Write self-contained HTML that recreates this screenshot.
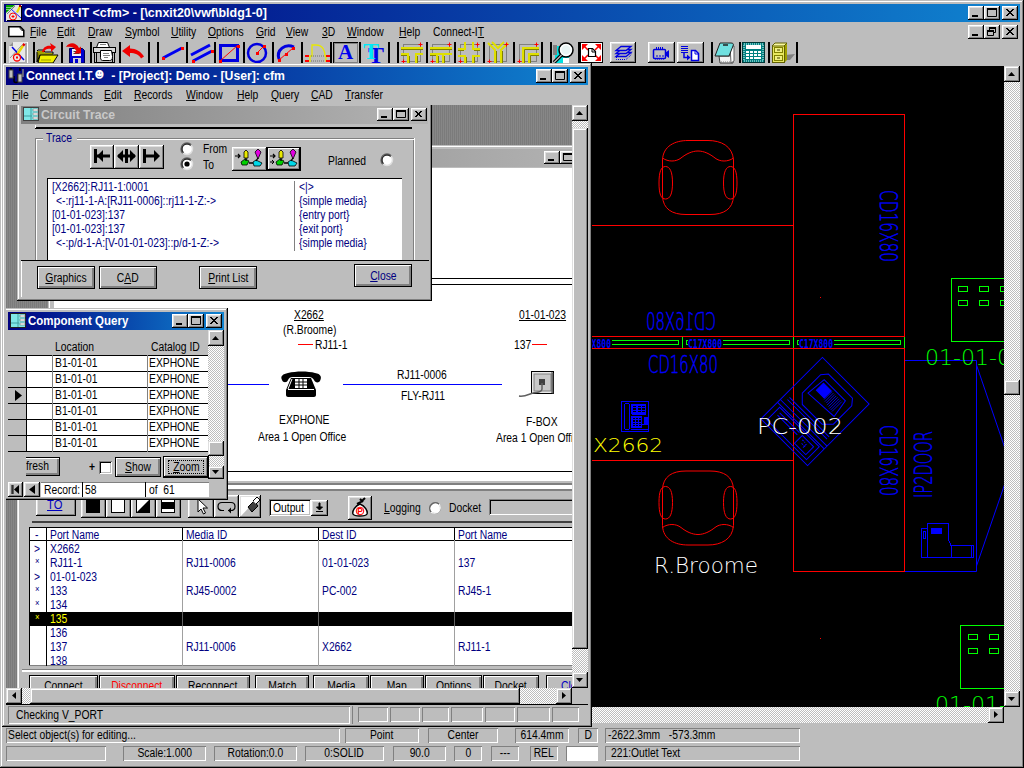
<!DOCTYPE html>
<html><head><meta charset="utf-8"><title>Connect-IT</title>
<style>
*{box-sizing:border-box;margin:0;padding:0}
html,body{width:1024px;height:768px;overflow:hidden;background:#bdbdbd}
body{position:relative;font-family:"Liberation Sans",sans-serif;font-size:12px;color:#000;line-height:14px}
.a{position:absolute}
.t{position:absolute;white-space:nowrap;transform:scaleX(.86);transform-origin:0 0;line-height:14px}
.tc{position:absolute;white-space:nowrap;text-align:center;line-height:14px}
.tc>span{display:inline-block;transform:scaleX(.86);transform-origin:50% 0}
.b{font-weight:bold}
u{text-decoration:underline;text-underline-offset:1px}
.win{position:absolute;background:#bdbdbd;box-shadow:inset -1px -1px #000,inset 1px 1px #bdbdbd,inset -2px -2px #808080,inset 2px 2px #fff}
.btn{position:absolute;background:#bdbdbd;box-shadow:inset -1px -1px #000,inset 1px 1px #fff,inset -2px -2px #808080,inset 2px 2px #dfdfdf}
.btnk{position:absolute;background:#bdbdbd;box-shadow:inset 0 0 0 1px #000,inset 2px 2px #fff,inset -3px -3px #808080}
.sunk{position:absolute;box-shadow:inset 1px 1px #808080,inset -1px -1px #fff,inset 2px 2px #000,inset -2px -2px #bdbdbd}
.st{position:absolute;box-shadow:inset 1px 1px #808080,inset -1px -1px #fff}
.tb{position:absolute;height:18px;background:linear-gradient(90deg,#000080,#1084d0)}
.tbi{position:absolute;height:18px;background:linear-gradient(90deg,#808080,#b8b8b8)}
.dith{background-color:#bdbdbd;background-image:conic-gradient(#fff 25%,#bdbdbd 0 50%,#fff 0 75%,#bdbdbd 0);background-size:2px 2px}
.cb{position:absolute;width:16px;height:14px;background:#bdbdbd;box-shadow:inset -1px -1px #000,inset 1px 1px #fff,inset -2px -2px #808080,inset 2px 2px #dfdfdf}
.cb svg{position:absolute;left:0;top:0}
.sb{position:absolute;width:16px;height:16px;background:#bdbdbd;box-shadow:inset -1px -1px #000,inset 1px 1px #dfdfdf,inset -2px -2px #808080,inset 2px 2px #fff}
.sb svg{position:absolute;left:0;top:0}
svg{overflow:visible}
</style></head><body>
<!-- ===== OUTER WINDOW FRAME ===== -->
<div class="win" style="left:0;top:0;width:1024px;height:768px"></div>
<div class="tb" style="left:4px;top:4px;width:1016px"></div>
<div class="t b" style="left:24px;top:6px;color:#fff;font-size:13px;transform:scaleX(.958)">Connect-IT &lt;cfm&gt; - [\cnxit20\vwf\bldg1-0]</div>
<!-- outer caption buttons -->
<div class="cb" style="left:968px;top:6px"><svg width="16" height="14"><rect x="4" y="9" width="6" height="2" fill="#000"/></svg></div>
<div class="cb" style="left:984px;top:6px"><svg width="16" height="14"><path d="M3.5 2.5h9v8h-9z M3 3.5h10" fill="none" stroke="#000" stroke-width="1"/><rect x="3" y="2" width="10" height="2" fill="#000"/></svg></div>
<div class="cb" style="left:1002px;top:6px"><svg width="16" height="14"><path d="M4 3l7 7M5 3l7 7M11 3l-7 7M12 3l-7 7" stroke="#000" stroke-width="1" fill="none"/></svg></div>
<div class="cb" style="left:968px;top:25px"><svg width="16" height="14"><rect x="4" y="9" width="6" height="2" fill="#000"/></svg></div>
<div class="cb" style="left:984px;top:25px"><svg width="16" height="14"><path d="M5.5 2.5h6v5h-6z M3.5 5.5h6v5h-6z" fill="#bdbdbd" stroke="#000"/><path d="M5 3h7M3 6h7" stroke="#000" stroke-width="2"/><rect x="4" y="7" width="5" height="3" fill="#bdbdbd"/></svg></div>
<div class="cb" style="left:1002px;top:25px"><svg width="16" height="14"><path d="M4 3l7 7M5 3l7 7M11 3l-7 7M12 3l-7 7" stroke="#000" stroke-width="1" fill="none"/></svg></div>
<!-- outer app icon -->
<svg class="a" style="left:6px;top:5px" width="16" height="16"><rect width="16" height="16" fill="#e4e4e4"/><path d="M0 0h9l-9 8z" fill="#00a000"/><path d="M0 2.500h6M0 4.500h4" stroke="#80d080" stroke-width="1"/><path d="M1 9l8-8" stroke="#808080" stroke-width="1"/><path d="M5 4l10 9" stroke="#2020ff" stroke-width="1"/><path d="M10 7l3-6 2 1-3 6z" fill="#e8e000"/><rect x="13" y="0" width="2" height="2" fill="#c00000"/><circle cx="7" cy="11.500" r="3.500" fill="none" stroke="#f00" stroke-width="1"/><path d="M5.500 11.500h3M7 10v3" stroke="#f00"/><path d="M15.500 1v15M1 15.500h15" stroke="#000" stroke-width="1"/></svg>
<!-- outer menu -->
<svg class="a" style="left:8px;top:26px" width="17" height="12"><path d="M.8 .8h11.500l3.500 3.500v6.200h-15z" fill="#fff" stroke="#000" stroke-width="1.500"/><path d="M12 1c0 2 1 3.500 3.500 3.500" fill="none" stroke="#000" stroke-width="1"/></svg>
<div class="t" style="left:30px;top:25px"><u>F</u>ile</div>
<div class="t" style="left:57px;top:25px"><u>E</u>dit</div>
<div class="t" style="left:88px;top:25px"><u>D</u>raw</div>
<div class="t" style="left:125px;top:25px"><u>S</u>ymbol</div>
<div class="t" style="left:171px;top:25px"><u>U</u>tility</div>
<div class="t" style="left:208px;top:25px"><u>O</u>ptions</div>
<div class="t" style="left:256px;top:25px"><u>G</u>rid</div>
<div class="t" style="left:286px;top:25px"><u>V</u>iew</div>
<div class="t" style="left:322px;top:25px"><u>3</u>D</div>
<div class="t" style="left:347px;top:25px"><u>W</u>indow</div>
<div class="t" style="left:399px;top:25px"><u>H</u>elp</div>
<div class="t" style="left:433px;top:25px">Connect-I<u>T</u></div>
<!--TB0-->
<!-- toolbar -->
<div class="a" style="left:4px;top:42px;width:2px;height:21px;background:#000"></div>
<svg class="a" style="left:6px;top:42px" width="24" height="21" viewBox="0 0 24 21"><path d="M3 4l4-4h14v21h-18z" fill="#e8e8e8"/><path d="M3 4h4v-4z" fill="#909090"/><path d="M19 1h2v20h-17v-1h15z" fill="#808080" opacity=".6"/><path d="M4 16l12-13" stroke="#909090" stroke-width="1"/><path d="M6 5l12 13" stroke="#0000e0" stroke-width="1.5"/><path d="M10 12l6-9 2 1.500-6 9z" fill="#e8d800"/><path d="M16 3l1.500-2 2 1.500-1.500 2z" fill="#e00000"/><circle cx="11" cy="15.500" r="3.500" fill="none" stroke="#f00" stroke-width="1.300"/><rect x="10" y="14.500" width="2" height="2" fill="#f00"/></svg>
<div class="a" style="left:33px;top:42px;width:2px;height:21px;background:#000"></div>
<svg class="a" style="left:35px;top:42px" width="24" height="21" viewBox="0 0 24 21"><path d="M2 9h7l1 2h8v3h-16z" fill="#a0a000"/><path d="M2 9l1-1h5l2 2h8v2" fill="none" stroke="#000" stroke-width="1"/><path d="M5 13h18l-5 8h-15z" fill="#f0f000" stroke="#000" stroke-width="1"/><path d="M2 10v10l3-7" fill="#808000" stroke="#000" stroke-width="1"/><path d="M7 10c1-5 5-7 9-6l-1-3 6 4-5 5v-3c-3-1-6 0-7 3z" fill="#f00000"/><path d="M6 18h10" stroke="#a0a000" stroke-width="1"/></svg>
<div class="a" style="left:61px;top:42px;width:2px;height:21px;background:#000"></div>
<svg class="a" style="left:63px;top:42px" width="24" height="21" viewBox="0 0 24 21"><path d="M6.500 6.500h13l2 2v12.500h-15z" fill="#0000d0" stroke="#000050" stroke-width="1"/><rect x="9" y="7" width="9" height="7" fill="#f0f0f0"/><path d="M10.500 9.500h5M10.500 11.500h6" stroke="#404040" stroke-width="1"/><rect x="10" y="16" width="8" height="5" fill="#d0d0d0"/><rect x="12" y="17" width="3" height="4" fill="#0000d0"/><path d="M3 5c3-5 10-5 13 1l2-1.500v7h-7l2.500-2.500c-2-4-6-5-10.500-4z" fill="#e80000"/></svg>
<div class="a" style="left:90px;top:42px;width:2px;height:21px;background:#000"></div>
<svg class="a" style="left:92px;top:42px" width="24" height="21" viewBox="0 0 24 21"><path d="M6.500 .5h9l2 5h-13z" fill="#fff" stroke="#000" stroke-width="1"/><path d="M8 2.500h6" stroke="#808080"/><rect x="1.500" y="5.500" width="22" height="5" fill="#d8d8d8" stroke="#000" stroke-width="1"/><path d="M2.500 10v11M4.500 10v11M20.500 10v11M22.500 10v11" stroke="#000" stroke-width="1"/><path d="M8.500 8.500h11l1 6c0 3-1 4-3 4h-7c-1 0-2-1-2-3z" fill="#fff" stroke="#000" stroke-width="1"/><path d="M11 11.500h6M11 13.500h7M12 15.500h4" stroke="#808080" stroke-width="1"/><path d="M2 20.500h21" stroke="#000" stroke-width="1"/></svg>
<div class="a" style="left:119px;top:42px;width:2px;height:21px;background:#000"></div>
<svg class="a" style="left:121px;top:42px" width="24" height="21" viewBox="0 0 24 21"><path d="M1 9l8-6v3.500c6 0 11 3 14 8l-3 2c-2-4-6-5.500-11-5.500v4z" fill="#f00000"/></svg>
<div class="a" style="left:27px;top:42px;width:1px;height:21px;background:#fff"></div>
<div class="a" style="left:148px;top:42px;width:2px;height:21px;background:#000"></div>
<div class="a" style="left:157px;top:42px;width:2px;height:21px;background:#000"></div>
<svg class="a" style="left:159px;top:42px" width="24" height="21" viewBox="0 0 24 21"><path d="M4 16l19-10" stroke="#0000f0" stroke-width="3"/><rect x="3" y="15" width="3" height="3" fill="#f00"/><rect x="22" y="5" width="3" height="3" fill="#f00"/></svg>
<div class="a" style="left:186px;top:42px;width:2px;height:21px;background:#000"></div>
<svg class="a" style="left:188px;top:42px" width="24" height="21" viewBox="0 0 24 21"><path d="M3 13l19-10M5 19l19-10" stroke="#0000f0" stroke-width="3"/><rect x="4" y="18" width="3" height="3" fill="#f00"/><rect x="23" y="8" width="3" height="3" fill="#f00"/></svg>
<div class="a" style="left:214px;top:42px;width:2px;height:21px;background:#000"></div>
<svg class="a" style="left:216px;top:42px" width="24" height="21" viewBox="0 0 24 21"><rect x="4.500" y="3.500" width="17" height="15" fill="none" stroke="#0000e0" stroke-width="3"/><path d="M4 19l18-16" stroke="#f00" stroke-width="1"/><rect x="3" y="18" width="3" height="3" fill="#f00"/><rect x="21" y="3" width="3" height="3" fill="#f00"/></svg>
<div class="a" style="left:243px;top:42px;width:2px;height:21px;background:#000"></div>
<svg class="a" style="left:245px;top:42px" width="24" height="21" viewBox="0 0 24 21"><circle cx="12" cy="11" r="9" fill="none" stroke="#0000e0" stroke-width="2.500"/><path d="M12 11l7-7" stroke="#f00" stroke-width="1"/><rect x="11" y="10" width="3" height="3" fill="#f00"/><rect x="18" y="3" width="3" height="3" fill="#f00"/></svg>
<div class="a" style="left:272px;top:42px;width:2px;height:21px;background:#000"></div>
<svg class="a" style="left:274px;top:42px" width="24" height="21" viewBox="0 0 24 21"><path d="M5 17c-3-9 6-16 15-12" fill="none" stroke="#0000e0" stroke-width="3"/><path d="M5 18l14-12" stroke="#f00" stroke-width="1"/><rect x="4" y="17" width="3" height="3" fill="#f00"/><rect x="11" y="11" width="3" height="3" fill="#f00"/><rect x="18" y="5" width="3" height="3" fill="#f00"/></svg>
<div class="a" style="left:301px;top:42px;width:2px;height:21px;background:#000"></div>
<svg class="a" style="left:303px;top:42px" width="28" height="21" viewBox="0 0 28 21"><path d="M7 20v-6h2v-11h4c7 0 9 6 9 11h1v6" fill="none" stroke="#e8e800" stroke-width="1.300"/><path d="M8 14h14M8 19h14" stroke="#707070" stroke-width="1" stroke-dasharray="1 1"/><rect x="2" y="13" width="4" height="2" fill="#f00"/><rect x="2" y="18" width="4" height="2" fill="#f00"/><rect x="23" y="13" width="4" height="2" fill="#f00"/><rect x="23" y="18" width="4" height="2" fill="#f00"/></svg>
<div class="a" style="left:330px;top:42px;width:2px;height:21px;background:#000"></div>
<div class="a" style="left:333px;top:42px;width:25px;height:21px;background:#bdbdbd;box-shadow:inset 1px 1px #000,inset -1px -1px #808080,inset 2px 2px #808080"></div>
<div class="a" style="left:333px;top:41px;width:25px;height:22px;text-align:center;font:bold 21px/22px 'Liberation Serif',serif;color:#0000f0">A</div>
<div class="a" style="left:359px;top:42px;width:2px;height:21px;background:#000"></div>
<svg class="a" style="left:359px;top:40px" width="30" height="24" viewBox="359 40 30 24" font-family="'Liberation Serif',serif" font-weight="bold" font-size="24"><text x="368" y="62.500" fill="#0000e8">T</text><text x="363" y="59.400" fill="#00e8f8">T</text></svg>
<div class="a" style="left:388px;top:42px;width:2px;height:21px;background:#000"></div>
<div class="a" style="left:397px;top:42px;width:2px;height:21px;background:#000"></div>
<svg class="a" style="left:399px;top:42px" width="26" height="21" viewBox="0 0 26 21"><rect x="4.500" y="2.500" width="17" height="17" fill="none" stroke="#808080"/><path d="M2 6h22M2 12h7v9M24 12h-7v9" stroke="#e0e000" stroke-width="2" fill="none"/><path d="M2 7.500h22M2 13.500h6M10.500 14v7M18.500 14v7" stroke="#808000" stroke-width="1" fill="none"/><path d="M19.5 2.5h4M21.5 0.5v4" stroke="#f00" stroke-width="1"/><path d="M2.5 19.5h4M4.5 17.5v4" stroke="#f00" stroke-width="1"/></svg>
<div class="a" style="left:426px;top:42px;width:2px;height:21px;background:#000"></div>
<svg class="a" style="left:428px;top:42px" width="26" height="21" viewBox="0 0 26 21"><rect x="4.500" y="2.500" width="17" height="17" fill="none" stroke="#808080"/><path d="M2 6h22M2 12h22M9 13v8M15 13v8" stroke="#e0e000" stroke-width="2" fill="none"/><path d="M2 7.500h22M2 13.500h6M10.500 14v7M16.500 14v7" stroke="#808000" stroke-width="1" fill="none"/><path d="M19.5 2.5h4M21.5 0.5v4" stroke="#f00" stroke-width="1"/><path d="M2.5 19.5h4M4.5 17.5v4" stroke="#f00" stroke-width="1"/></svg>
<div class="a" style="left:454px;top:42px;width:2px;height:21px;background:#000"></div>
<svg class="a" style="left:456px;top:42px" width="26" height="21" viewBox="0 0 26 21"><rect x="4.500" y="2.500" width="17" height="17" fill="none" stroke="#808080"/><path d="M2 7h7v-7M24 7h-7v-7M2 14h7v7M24 14h-7v7" stroke="#e0e000" stroke-width="2" fill="none"/><path d="M2 8.500h6M18 8.500h6M10.500 15v6M18.500 15v6" stroke="#808000" stroke-width="1" fill="none"/><path d="M19.5 2.5h4M21.5 0.5v4" stroke="#f00" stroke-width="1"/><path d="M2.5 19.5h4M4.5 17.5v4" stroke="#f00" stroke-width="1"/></svg>
<div class="a" style="left:483px;top:42px;width:2px;height:21px;background:#000"></div>
<svg class="a" style="left:485px;top:42px" width="26" height="21" viewBox="0 0 26 21"><rect x="4.500" y="2.500" width="17" height="17" fill="none" stroke="#808080"/><path d="M3 1l7 7v13M23 1l-7 7v13M7 0l6 6 6-6" stroke="#e0e000" stroke-width="2" fill="none"/><path d="M11.500 9v12M17.500 9v12" stroke="#808000" stroke-width="1" fill="none"/><path d="M19.5 2.5h4M21.5 0.5v4" stroke="#f00" stroke-width="1"/><path d="M2.5 19.5h4M4.5 17.5v4" stroke="#f00" stroke-width="1"/></svg>
<div class="a" style="left:513px;top:42px;width:2px;height:21px;background:#000"></div>
<svg class="a" style="left:515px;top:42px" width="26" height="21" viewBox="0 0 26 21"><rect x="4.500" y="2.500" width="17" height="17" fill="none" stroke="#808080"/><path d="M24 6h-16v15M24 12h-10v9" stroke="#e0e000" stroke-width="2" fill="none"/><path d="M24 7.500h-14.500v13.500M24 13.500h-8.500v7.500" stroke="#808000" stroke-width="1" fill="none"/><path d="M19.5 2.5h4M21.5 0.5v4" stroke="#f00" stroke-width="1"/><path d="M2.5 19.5h4M4.5 17.5v4" stroke="#f00" stroke-width="1"/></svg>
<div class="a" style="left:541px;top:42px;width:2px;height:21px;background:#000"></div>
<div class="a" style="left:550px;top:42px;width:2px;height:21px;background:#000"></div>
<svg class="a" style="left:552px;top:42px" width="26" height="21" viewBox="0 0 26 21"><rect x="3" y="4" width="14" height="17" fill="#00e0e0"/><rect x="1" y="3" width="4" height="10" fill="#808080"/><circle cx="14" cy="8" r="7" fill="#e8f4f4" stroke="#000" stroke-width="1.500"/><circle cx="14" cy="8" r="5.300" fill="none" stroke="#fff" stroke-width="1.200"/><path d="M9.500 13l-7.500 7.500" stroke="#000" stroke-width="3.500"/><path d="M9.500 13l-7.500 7.500" stroke="#bdbdbd" stroke-width="1.200"/><rect x="11" y="16" width="6" height="5" fill="#fff"/></svg>
<div class="a" style="left:578px;top:42px;width:2px;height:21px;background:#000"></div>
<svg class="a" style="left:580px;top:42px" width="23" height="21" viewBox="0 0 23 21"><rect x=".5" y=".5" width="22" height="20" fill="#fff" stroke="#000"/><path d="M2 2h6l-6 6zM21 2v6l-6-6zM2 19v-6l6 6zM21 19h-6l6-6z" fill="#f00"/><path d="M4 4l4 4M19 4l-4 4M4 17l4-4M19 17l-4-4" stroke="#f00" stroke-width="1.500"/><path d="M8.500 6.500h4l3 3v5h-7z" fill="#fff" stroke="#000" stroke-width="1.200"/><path d="M12 7v3h3" fill="none" stroke="#000" stroke-width="1"/></svg>
<div class="btn" style="left:610px;top:42px;width:26px;height:21px"><svg class="a" style="left:0;top:0" width="26" height="21" viewBox="0 0 26 21"><g fill="#bdbdbd" stroke="#0000e0" stroke-width="1.300"><path d="M6 14.500l5-4h10l-5 4z"/><path d="M6 11.500l5-4h10l-5 4z"/><path d="M6 8.500l5-4h10l-5 4z"/></g><path d="M6.500 15v2.500h9.500l5-4.500v-2" fill="none" stroke="#0000e0" stroke-width="1" stroke-dasharray="1 1"/></svg></div>
<div class="btn" style="left:648px;top:42px;width:27px;height:21px"><svg class="a" style="left:0;top:0" width="27" height="21" viewBox="0 0 27 21"><rect x="5.500" y="7.500" width="12" height="9" rx="1" fill="none" stroke="#0000e0" stroke-width="1.500"/><path d="M17 11l4-3v8l-4-3z" fill="#0000e0"/><path d="M8 6h7" stroke="#0000e0" stroke-width="2" stroke-dasharray="1 1"/><path d="M8 14h8" stroke="#0000e0" stroke-width="1" stroke-dasharray="2 1"/><path d="M7 17h10" stroke="#0000e0" stroke-width="1" stroke-dasharray="1 1"/></svg></div>
<div class="btn" style="left:677px;top:42px;width:27px;height:21px"><svg class="a" style="left:0;top:0" width="27" height="21" viewBox="0 0 27 21"><path d="M4 4.500h7M4 6.500h7M4 8.500h7M4 10.500h7" stroke="#0000e0" stroke-width="1"/><path d="M7 11v4.500h4" fill="none" stroke="#0000e0" stroke-width="1.500"/><path d="M10 12.500l3.500 3-3.500 3z" fill="#0000e0"/><path d="M14.500 8.500h4l3 3v7h-7z" fill="#fff" stroke="#0000e0" stroke-width="1.500"/><path d="M18 8.500v3.500h3.500" fill="none" stroke="#0000e0" stroke-width="1"/></svg></div>
<div class="a" style="left:711px;top:42px;width:2px;height:21px;background:#000"></div>
<svg class="a" style="left:713px;top:42px" width="24" height="21" viewBox="0 0 24 21"><path d="M6 14h14v7h-13z" fill="#f4f4f4" stroke="#404040" stroke-width="1"/><path d="M17 4h4v15l-3 2z" fill="#fff" stroke="#606060" stroke-width="1"/><path d="M7 1h11c2 0 3 1 2 3l-4 10h-14z" fill="#70e0e0" stroke="#202020" stroke-width="1"/><path d="M10 3h5" stroke="#202020" stroke-width="1.500"/><path d="M8 20h10" stroke="#808080" stroke-dasharray="1 1"/></svg>
<div class="a" style="left:739px;top:42px;width:2px;height:21px;background:#000"></div>
<svg class="a" style="left:742px;top:42px" width="23" height="21" viewBox="0 0 23 21"><rect x="0" y="0" width="23" height="21" fill="#008080"/><rect x=".5" y=".5" width="22" height="20" fill="none" stroke="#003838"/><rect x="2" y="2" width="19" height="17" fill="none" stroke="#e0ffff" stroke-dasharray="1 1"/><rect x="4" y="3" width="15" height="4" fill="#fff"/><g fill="#fff"><rect x="4" y="9" width="3" height="2"/><rect x="8" y="9" width="3" height="2"/><rect x="12" y="9" width="3" height="2"/><rect x="16" y="9" width="3" height="2"/><rect x="4" y="12" width="3" height="2"/><rect x="8" y="12" width="3" height="2"/><rect x="12" y="12" width="3" height="2"/><rect x="16" y="12" width="3" height="2"/><rect x="4" y="15" width="3" height="2"/><rect x="8" y="15" width="3" height="2"/><rect x="12" y="15" width="7" height="2"/></g></svg>
<div class="a" style="left:768px;top:42px;width:2px;height:21px;background:#000"></div>
<svg class="a" style="left:771px;top:42px" width="24" height="21" viewBox="0 0 24 21"><path d="M14 13l10-1-5 6h-5z" fill="#808080"/><path d="M1 4l3-3h12v17l-3 3z" fill="#a0a000"/><rect x="1.500" y="3.500" width="12" height="17" fill="#e8e860" stroke="#606000"/><path d="M1 4l3-3h12l-3 3z" fill="#f8f8a0" stroke="#606000" stroke-width="1"/><rect x="3.500" y="5.500" width="8" height="5" fill="#f0f080" stroke="#808000"/><rect x="3.500" y="13.500" width="8" height="5" fill="#f0f080" stroke="#808000"/><path d="M6 8h3M6 16h3" stroke="#404000" stroke-width="1"/></svg>
<div class="a" style="left:796px;top:42px;width:2px;height:21px;background:#000"></div>
<!--TB1-->
<!--CAD0-->
<!-- ===== CAD drawing area ===== -->
<div class="a" style="left:590px;top:64px;width:2px;height:644px;background:#808080"></div>
<div class="a" style="left:592px;top:66px;width:412px;height:641px;background:#000"></div>
<svg class="a" style="left:592px;top:66px;overflow:hidden" width="412" height="641" viewBox="592 66 412 641" font-family="'DejaVu Sans Light','DejaVu Sans Mono',monospace">
<g fill="none" stroke="#f00" stroke-width="1" shape-rendering="crispEdges">
<path d="M592 225.500H793.500M592 336.500H904.500M592 348.500H904.500M592 460.500H793.500"/>
<rect x="793.500" y="114.500" width="111" height="457"/>
<rect x="820" y="297" width="1" height="1" fill="#f00" stroke="none"/><rect x="820" y="638" width="1" height="1" fill="#f00" stroke="none"/>
</g>
<!-- chairs -->
<g fill="none" stroke="#f00" stroke-width="1">
<path d="M662.500 196V160C663 146 675 140.500 688 140.500H708C721 140.500 732.500 146 733.500 160V196C733 209 724 214.500 710 214.500H686C672 214.500 663 209 662.500 196ZM662.500 158C668 162 676 162 681 158C686 154 692 151 698 151C704 151 710 154 715 158C720 162 728 162 733.500 158M665.500 166.500C670 166.500 672.500 172 672.500 183C672.500 194 670 199 665.500 199C661 199 659 194 659 183C659 172 661 166.500 665.500 166.500ZM730.500 166.500C735 166.500 737 172 737 183C737 194 735 199 730.500 199C726 199 723.500 194 723.500 183C723.500 172 726 166.500 730.500 166.500Z"/>
<path transform="translate(0,685.500) scale(1,-1)" d="M662.500 196V160C663 146 675 140.500 688 140.500H708C721 140.500 732.500 146 733.500 160V196C733 209 724 214.500 710 214.500H686C672 214.500 663 209 662.500 196ZM662.500 158C668 162 676 162 681 158C686 154 692 151 698 151C704 151 710 154 715 158C720 162 728 162 733.500 158M665.500 166.500C670 166.500 672.500 172 672.500 183C672.500 194 670 199 665.500 199C661 199 659 194 659 183C659 172 661 166.500 665.500 166.500ZM730.500 166.500C735 166.500 737 172 737 183C737 194 735 199 730.500 199C726 199 723.500 194 723.500 183C723.500 172 726 166.500 730.500 166.500Z"/>
</g>
<!-- green wall inserts -->
<g fill="none" stroke="#0f0" stroke-width="1" shape-rendering="crispEdges">
<rect x="575.500" y="340.500" width="103" height="4"/><rect x="686.500" y="340.500" width="103" height="4"/><rect x="797.500" y="340.500" width="103" height="4"/>
<path d="M682.500 337v11M793.500 337v11M904.500 337v11"/>
<rect x="951.500" y="278.500" width="60" height="63"/>
<rect x="958.500" y="286.500" width="9" height="5"/><rect x="979.500" y="286.500" width="9" height="5"/><rect x="1000.500" y="286.500" width="9" height="5"/>
<rect x="958.500" y="300.500" width="9" height="5"/><rect x="979.500" y="300.500" width="9" height="5"/><rect x="1000.500" y="300.500" width="9" height="5"/>
<rect x="960.500" y="625.500" width="60" height="63"/>
<rect x="968.500" y="634.500" width="9" height="5"/><rect x="989.500" y="634.500" width="9" height="5"/>
<rect x="968.500" y="648.500" width="9" height="5"/><rect x="989.500" y="648.500" width="9" height="5"/>
</g>
<!-- blue lines -->
<g fill="none" stroke="#00f" stroke-width="1">
<path d="M905 360.500H976.500V571.500H905M976.500 365L1011 466L976.500 566" />
</g>
<!-- texts -->
<g fill="#00f" stroke="#00f" stroke-width=".45">
<g shape-rendering="crispEdges" stroke="none"><rect x="592" y="338" width="20" height="10" fill="#000"/><rect x="688" y="338" width="35" height="10" fill="#000"/><rect x="799" y="338" width="35" height="10" fill="#000"/></g>
<g font-family="'DejaVu Sans Mono',monospace" font-weight="bold" font-size="13" stroke="none">
<text x="577" y="347.500" textLength="34" lengthAdjust="spacingAndGlyphs">C17X800</text>
<text x="688" y="347.500" textLength="34" lengthAdjust="spacingAndGlyphs">C17X800</text>
<text x="799" y="347.500" textLength="34" lengthAdjust="spacingAndGlyphs">C17X800</text>
</g>
<text transform="translate(716,330) scale(-1,1)" font-size="25" textLength="70" lengthAdjust="spacingAndGlyphs">CD16X80</text>
<text x="648" y="373" font-size="25" textLength="70" lengthAdjust="spacingAndGlyphs">CD16X80</text>
<text transform="translate(880,190) rotate(90)" font-size="25" textLength="72" lengthAdjust="spacingAndGlyphs">CD16X80</text>
<text transform="translate(880,425) rotate(90)" font-size="25" textLength="71" lengthAdjust="spacingAndGlyphs">CD16X80</text>
<text transform="translate(932,498) rotate(-90)" font-size="25" textLength="67" lengthAdjust="spacingAndGlyphs">IP2DOOR</text>
</g>
<text x="593" y="452" font-size="19.500" fill="#ff0" textLength="70" lengthAdjust="spacingAndGlyphs">X2662</text>
<text x="654" y="573" font-size="21" fill="#fff" textLength="104" lengthAdjust="spacingAndGlyphs">R.Broome</text>
<text x="925" y="364.500" font-size="21" fill="#0f0" textLength="100" lengthAdjust="spacingAndGlyphs">01-01-02</text>
<text x="935" y="711.500" font-size="21" fill="#0f0" textLength="100" lengthAdjust="spacingAndGlyphs">01-01-02</text>
<!-- phone symbol -->
<g fill="none" stroke="#00f" stroke-width="1" shape-rendering="crispEdges">
<rect x="621.500" y="401.500" width="27" height="30"/>
<rect x="624.500" y="403.500" width="5" height="26" rx="2"/>
<rect x="631.500" y="404.500" width="14" height="9" fill="#00f"/>
<rect x="631.500" y="416.500" width="10" height="11" fill="#00f"/>
<path d="M632 414.500h14M631 429.500h17M642 424.500h6"/>
<rect x="644.500" y="417.500" width="3" height="6" fill="#00f"/>
<g fill="#000" stroke="none"><rect x="633" y="406" width="3" height="1"/><rect x="638" y="406" width="3" height="1"/><rect x="642" y="406" width="3" height="1"/><rect x="633" y="408" width="3" height="2"/><rect x="638" y="408" width="3" height="2"/><rect x="642" y="408" width="3" height="2"/><rect x="633" y="411" width="3" height="1"/><rect x="638" y="411" width="3" height="1"/><rect x="642" y="411" width="3" height="1"/>
<rect x="633" y="418" width="2" height="1"/><rect x="636" y="418" width="2" height="1"/><rect x="639" y="418" width="2" height="1"/><rect x="633" y="420" width="2" height="2"/><rect x="636" y="420" width="2" height="2"/><rect x="639" y="420" width="2" height="2"/><rect x="633" y="423" width="2" height="1"/><rect x="636" y="423" width="2" height="1"/><rect x="639" y="423" width="2" height="1"/><rect x="633" y="425" width="2" height="1"/><rect x="636" y="425" width="2" height="1"/><rect x="639" y="425" width="2" height="1"/></g>
</g>
<!-- PC symbol -->
<g transform="translate(815,411.500) rotate(45)" fill="none" stroke="#00f" stroke-width="1">
<rect x="-33" y="-43.500" width="66" height="87"/>
<path d="M-22 -4V-30L-17 -36H17L22 -30V-4L14 4H-14Z"/>
<path d="M-18 -8L-16 -29H14L17 -10Z"/>
<rect x="-14" y="-26" width="11" height="10" fill="#00f"/>
<path d="M-2 -26V-15M0 -26V-14M2 -26V-14M4 -26V-13M6 -26V-13M8 -26V-12M10 -26V-12M12 -26V-12" stroke-width=".8"/>
<path d="M-28 8H28M-28 11H28M-33 16H33M-33 20H33"/>
<rect x="-28" y="22" width="56" height="18"/>
<path d="M-24 26H4M-24 29H4"/>
<rect x="8" y="26" width="16" height="11"/><path d="M11 29h4M13 32h6M17 29v5" stroke-dasharray="2 1"/>
</g>
<text x="757" y="433.500" font-size="22" fill="#fff" textLength="86" lengthAdjust="spacingAndGlyphs">PC-002</text>
<!-- copier symbol -->
<g fill="none" stroke="#00f" stroke-width="1" shape-rendering="crispEdges">
<rect x="921.500" y="528.500" width="6" height="29"/><rect x="923.500" y="531.500" width="2" height="7"/>
<path d="M927.500 557.500V523.500H948.500V540L951.500 546.500V557.500ZM951.500 545.500H973.500V557.500H951.500M971.500 546v11"/>
<rect x="931" y="528" width="10" height="5" fill="#00f"/>
</g>
</svg>
<!-- CAD scrollbars -->
<div class="a dith" style="left:1004px;top:66px;width:16px;height:641px"></div>
<div class="sb" style="left:1004px;top:66px"><svg width="16" height="16"><path d="M4 10h7l-3.500-4z" fill="#000"/></svg></div>
<div class="sb" style="left:1004px;top:380px;height:15px"></div>
<div class="sb" style="left:1004px;top:691px"><svg width="16" height="16"><path d="M4 6h7l-3.500 4z" fill="#000"/></svg></div>
<div class="a dith" style="left:592px;top:707px;width:412px;height:16px"></div>
<div class="sb" style="left:988px;top:707px"><svg width="16" height="16"><path d="M6 4v7l4-3.500z" fill="#000"/></svg></div>
<div class="a" style="left:1004px;top:707px;width:16px;height:16px;background:#bdbdbd"></div>
<!--CAD1-->
<!--IN0-->
<!-- ===== INNER WINDOW: Connect I.T. ===== -->
<div class="win" style="left:2px;top:63px;width:590px;height:664px"></div>
<div class="tb" style="left:6px;top:67px;width:582px"></div>
<svg class="a" style="left:8px;top:68px" width="18" height="16"><path d="M3 0v3M12 0v3M6 8v5c0 2 4 2 4 0v-7" fill="none" stroke="#000" stroke-width="1.500"/><rect x="1" y="2" width="4" height="8" fill="#bdbdbd" stroke="#404040" stroke-width="1"/><rect x="10" y="6" width="4" height="8" fill="#bdbdbd" stroke="#404040" stroke-width="1"/><path d="M15 1v8" stroke="#808080" stroke-width="1.500"/></svg>
<div class="t b" style="left:26px;top:69px;color:#fff;font-size:13px;transform:scaleX(.94)">Connect I.T.<span style="font-size:10px;position:relative;top:-2px;font-weight:normal;font-family:'DejaVu Sans',sans-serif">&#9787;</span>&nbsp; - [Project]: Demo - [User]: cfm</div>
<div class="cb" style="left:536px;top:69px"><svg width="16" height="14"><rect x="4" y="9" width="6" height="2" fill="#000"/></svg></div>
<div class="cb" style="left:552px;top:69px"><svg width="16" height="14"><path d="M3.500 2.500h9v8h-9z" fill="none" stroke="#000"/><rect x="3" y="2" width="10" height="2" fill="#000"/></svg></div>
<div class="cb" style="left:570px;top:69px"><svg width="16" height="14"><path d="M4 3l7 7M5 3l7 7M11 3l-7 7M12 3l-7 7" stroke="#000" stroke-width="1" fill="none"/></svg></div>
<!-- inner menu -->
<div class="t" style="left:12px;top:88px"><u>F</u>ile</div>
<div class="t" style="left:40px;top:88px"><u>C</u>ommands</div>
<div class="t" style="left:104px;top:88px"><u>E</u>dit</div>
<div class="t" style="left:134px;top:88px"><u>R</u>ecords</div>
<div class="t" style="left:186px;top:88px"><u>W</u>indow</div>
<div class="t" style="left:237px;top:88px"><u>H</u>elp</div>
<div class="t" style="left:271px;top:88px"><u>Q</u>uery</div>
<div class="t" style="left:311px;top:88px"><u>C</u>AD</div>
<div class="t" style="left:345px;top:88px"><u>T</u>ransfer</div>
<!-- MDI client -->
<div id="mdi" class="a" style="left:6px;top:105px;width:566px;height:583px;background:#818181 linear-gradient(90deg,#7b7b7b 50%,#878787 50%) 0 0/2px 2px;overflow:hidden">
<div class="a" style="left:-6px;top:-105px;width:1024px;height:768px">
<!-- diagram window (background) -->
<div class="win" style="left:48px;top:145px;width:640px;height:340px"></div>
<div class="tbi" style="left:52px;top:149px;width:632px;background:linear-gradient(90deg,#808080,#bcbcbc)"></div>
<div class="cb" style="left:544px;top:151px;height:13px"><svg width="16" height="13"><rect x="4" y="8" width="6" height="2" fill="#000"/></svg></div>
<div class="cb" style="left:560px;top:151px;height:13px"><svg width="16" height="13"><path d="M3.500 2.500h9v7h-9z" fill="none" stroke="#000"/><rect x="3" y="2" width="10" height="2" fill="#000"/></svg></div>
<div class="a" style="left:54px;top:168px;width:530px;height:313px;background:#fff"></div>
<div class="a" style="left:54px;top:278px;width:530px;height:1px;background:#000"></div>
<div class="a" style="left:54px;top:284px;width:530px;height:1px;background:#000"></div>
<div class="a" style="left:54px;top:471px;width:530px;height:1px;background:#000"></div>
<!-- diagram content -->
<div class="t" style="left:294px;top:308px"><u>X2662</u></div>
<div class="t" style="left:283px;top:323px">(R.Broome)</div>
<div class="a" style="left:298px;top:344px;width:15px;height:1px;background:#f00"></div>
<div class="t" style="left:315px;top:338px">RJ11-1</div>
<div class="a" style="left:228px;top:384px;width:41px;height:1px;background:#00f"></div>
<div class="a" style="left:343px;top:384px;width:159px;height:1px;background:#00f"></div>
<svg class="a" style="left:280px;top:371px" width="42" height="26" viewBox="0 0 42 26"><path d="M2 9C0 5 3 3 8 2C16 0 28 0 35 2C41 3 42 6 40 10C39 12 35 12 34 9C33 7 31 6 29 6H13C10 6 9 7 8 9C7 12 3 12 2 9Z" fill="#000"/><path d="M11 7H31L36 19V24C36 25 35 26 34 26H8C7 26 6 25 6 24V19Z" fill="#000"/><path d="M8 18.500H34" stroke="#fff" stroke-width="1"/><rect x="15" y="8" width="12" height="9" fill="#fff"/><path d="M15 11h12M15 14h12M19 8v9M23 8v9" stroke="#000" stroke-width="1"/><path d="M12 8l-4 10" stroke="#fff" stroke-width="1"/></svg>
<div class="t" style="left:279px;top:413px">EXPHONE</div>
<div class="t" style="left:258px;top:430px">Area 1 Open Office</div>
<div class="t" style="left:397px;top:368px">RJ11-0006</div>
<div class="t" style="left:401px;top:389px">FLY-RJ11</div>
<div class="t" style="left:519px;top:308px"><u>01-01-023</u></div>
<div class="t" style="left:514px;top:338px">137</div>
<div class="a" style="left:532px;top:344px;width:15px;height:1px;background:#f00"></div>
<svg class="a" style="left:519px;top:371px" width="36" height="28" viewBox="0 0 36 28"><rect x="12.500" y=".5" width="22" height="22" fill="#e8e8e8" stroke="#000"/><rect x="15" y="3" width="17" height="17" fill="#c8c8c8" stroke="#808080"/><rect x="20" y="8" width="6" height="6" fill="#404040"/><path d="M23 12v6c0 4-6 3-9 4c-4 1-8 4-14 3" fill="none" stroke="#606060" stroke-width="1.500"/><path d="M33 1v21M34 2v21" stroke="#404040"/></svg>
<div class="t" style="left:526px;top:415px">F-BOX</div>
<div class="t" style="left:496px;top:431px">Area 1 Open Office</div>
<!-- bottom panel window -->
<div class="a" style="left:17px;top:481px;width:580px;height:215px;background:#bdbdbd"></div>
<div class="a" style="left:54px;top:481px;width:530px;height:2px;background:#bdbdbd"></div>
<div class="a" style="left:17px;top:483px;width:580px;height:2px;background:#808080"></div>
<div class="a" style="left:17px;top:485px;width:580px;height:4px;background:#fff"></div>
<div class="a" style="left:17px;top:489px;width:580px;height:2px;background:#808080"></div>
<div class="a" style="left:17px;top:483px;width:1px;height:210px;background:#dfdfdf"></div>
<div class="a" style="left:18px;top:484px;width:1px;height:210px;background:#fff"></div>
<div class="a" style="left:32px;top:521px;width:560px;height:2px;background:#404040"></div>
<!-- panel toolbar -->
<div class="btn" style="left:36px;top:495px;width:40px;height:21px"></div>
<div class="t" style="left:47px;top:498px;color:#0000c0;font-size:13px"><u>TO</u></div>
<div class="btn" style="left:81px;top:495px;width:25px;height:23px"><div class="a" style="left:5px;top:4px;width:14px;height:14px;background:#000"></div></div>
<div class="btn" style="left:106px;top:495px;width:25px;height:23px"><div class="a" style="left:5px;top:4px;width:14px;height:14px;background:#fff;border:1px solid #000"></div></div>
<div class="btn" style="left:131px;top:495px;width:25px;height:23px"><svg class="a" style="left:5px;top:4px" width="14" height="14"><rect width="14" height="14" fill="#fff"/><path d="M14 0v14h-14z" fill="#000"/><rect x=".5" y=".5" width="13" height="13" fill="none" stroke="#000"/></svg></div>
<div class="btn" style="left:156px;top:495px;width:25px;height:23px"><svg class="a" style="left:5px;top:4px" width="14" height="14"><rect width="14" height="14" fill="#fff"/><rect x="0" y="3" width="14" height="7" fill="#000"/><rect x=".5" y=".5" width="13" height="13" fill="none" stroke="#000"/></svg></div>
<div class="btn" style="left:188px;top:495px;width:26px;height:23px"><svg class="a" style="left:0;top:0" width="26" height="23"><path d="M10 4v13l3-3 2.500 5 2-1-2.500-5h4.500z" fill="#fff" stroke="#000" stroke-width="1"/></svg></div>
<div class="btn" style="left:214px;top:495px;width:25px;height:23px"><svg class="a" style="left:0;top:0" width="25" height="23"><path d="M10 15.500h-2c-3 0-4-2-4-4s1-4 4-4h9c3 0 4 2 4 4s-1 4-4 4h-3" fill="none" stroke="#000" stroke-width="1.200"/><path d="M14 15.500l3-3v6z" fill="#000"/></svg></div>
<div class="btn" style="left:239px;top:495px;width:22px;height:23px"><svg class="a" style="left:0;top:0" width="22" height="23"><path d="M2 21L20 2H2z" fill="#fff"/><path d="M9 12l6-6 4 5-6 6z" fill="#404040" stroke="#000"/><path d="M14 6l4-4 3 3-4 4" fill="#fff" stroke="#000"/></svg></div>
<div class="sunk" style="left:269px;top:499px;width:42px;height:17px;background:#fff"></div>
<div class="t" style="left:273px;top:501px">Output</div>
<div class="btn" style="left:311px;top:500px;width:17px;height:16px"><svg class="a" style="left:0;top:0" width="17" height="16"><path d="M8 3v4h-2.500l3 3 3-3h-2.500v-4zM5 11.500h7" fill="#000" stroke="#000" stroke-width="1"/></svg></div>
<div class="btn" style="left:348px;top:496px;width:24px;height:24px"><svg class="a" style="left:0;top:0" width="24" height="24"><path d="M12 8c-5 2-8 7-7 10c1 2 3 2 7 2s6 0 7-2c1-3-2-8-7-10z" fill="#fff" stroke="#000" stroke-width="1.500"/><path d="M9 8l4-2 4-4M12 3l3 3" stroke="#000" stroke-width="2" fill="none"/><circle cx="12" cy="15" r="3.800" fill="#fff" stroke="#f00" stroke-width="1"/><text x="9.300" y="18.300" font-size="8.500" font-weight="bold" fill="#f00" font-family="'Liberation Sans',sans-serif">P</text></svg></div>
<div class="t" style="left:384px;top:501px"><u>L</u>ogging</div>
<svg class="a" style="left:428px;top:501px" width="14" height="14"><circle cx="7" cy="7" r="5.500" fill="#fff" stroke="#808080" stroke-width="1"/><path d="M3 11a5.700 5.700 0 008-8" fill="none" stroke="#fff" stroke-width="1.200"/><path d="M11 3a5.700 5.700 0 00-8 8" fill="none" stroke="#606060" stroke-width="1.200"/></svg>
<div class="t" style="left:449px;top:501px">Docket</div>
<div class="sunk" style="left:489px;top:499px;width:100px;height:16px"></div>
<!-- table -->
<div class="a" style="left:29px;top:527px;width:560px;height:139px;background:#fff;border:1px solid #000;border-width:1px 0 0 1px"></div><div class="a" style="left:29px;top:665px;width:560px;height:1px;background:#808080"></div><div class="a" style="left:22px;top:669px;width:560px;height:1px;background:#808080"></div><div class="a" style="left:22px;top:670px;width:560px;height:2px;background:#fff"></div>
<div class="a" style="left:30px;top:540px;width:560px;height:1px;background:#000"></div>
<div class="a" style="left:46px;top:527px;width:1px;height:139px;background:#000"></div>
<div class="a" style="left:182px;top:527px;width:1px;height:139px;background:#a0a0a0"></div>
<div class="a" style="left:318px;top:527px;width:1px;height:139px;background:#a0a0a0"></div>
<div class="a" style="left:454px;top:527px;width:1px;height:139px;background:#a0a0a0"></div>
<div class="a" style="left:182px;top:527px;width:1px;height:13px;background:#000"></div>
<div class="a" style="left:318px;top:527px;width:1px;height:13px;background:#000"></div>
<div class="a" style="left:454px;top:527px;width:1px;height:13px;background:#000"></div>
<div class="a" style="left:30px;top:612px;width:560px;height:14px;background:#000"></div>
<div style="color:#000080">
<div class="t" style="left:35px;top:528px">-</div><div class="t" style="left:50px;top:528px">Port Name</div><div class="t" style="left:186px;top:528px">Media ID</div><div class="t" style="left:322px;top:528px">Dest ID</div><div class="t" style="left:458px;top:528px">Port Name</div>
<div class="t" style="left:34px;top:542px">&gt;</div><div class="t" style="left:50px;top:542px">X2662</div>
<div class="t" style="left:35px;top:554px;font-size:9px">&#215;</div><div class="t" style="left:50px;top:556px">RJ11-1</div><div class="t" style="left:186px;top:556px">RJ11-0006</div><div class="t" style="left:322px;top:556px">01-01-023</div><div class="t" style="left:458px;top:556px">137</div>
<div class="t" style="left:34px;top:570px">&gt;</div><div class="t" style="left:50px;top:570px">01-01-023</div>
<div class="t" style="left:35px;top:582px;font-size:9px">&#215;</div><div class="t" style="left:50px;top:584px">133</div><div class="t" style="left:186px;top:584px">RJ45-0002</div><div class="t" style="left:322px;top:584px">PC-002</div><div class="t" style="left:458px;top:584px">RJ45-1</div>
<div class="t" style="left:35px;top:596px;font-size:9px">&#215;</div><div class="t" style="left:50px;top:598px">134</div>
<div class="t" style="left:35px;top:610px;font-size:9px;color:#ff0">&#215;</div><div class="t" style="left:50px;top:612px;color:#ff0">135</div>
<div class="t" style="left:50px;top:626px">136</div>
<div class="t" style="left:50px;top:640px">137</div><div class="t" style="left:186px;top:640px">RJ11-0006</div><div class="t" style="left:322px;top:640px">X2662</div><div class="t" style="left:458px;top:640px">RJ11-1</div>
<div class="t" style="left:50px;top:654px">138</div>
</div>
<div class="a" style="left:182px;top:612px;width:1px;height:14px;background:#606060"></div><div class="a" style="left:318px;top:612px;width:1px;height:14px;background:#606060"></div><div class="a" style="left:454px;top:612px;width:1px;height:14px;background:#606060"></div>
<!-- bottom buttons (clipped by scrollbar) -->
<div class="btnk" style="left:29px;top:675px;width:69px;height:22px"></div><div class="tc" style="left:29px;top:679px;width:69px"><span>Connect</span></div>
<div class="btnk" style="left:99px;top:675px;width:76px;height:22px"></div><div class="tc" style="left:99px;top:679px;width:76px;color:#f00"><span>Disconnect</span></div>
<div class="btnk" style="left:176px;top:675px;width:74px;height:22px"></div><div class="tc" style="left:176px;top:679px;width:74px"><span>Reconnect</span></div>
<div class="btnk" style="left:255px;top:675px;width:54px;height:22px"></div><div class="tc" style="left:255px;top:679px;width:54px"><span>Match</span></div>
<div class="btnk" style="left:313px;top:675px;width:56px;height:22px"></div><div class="tc" style="left:313px;top:679px;width:56px"><span>Media</span></div>
<div class="btnk" style="left:370px;top:675px;width:54px;height:22px"></div><div class="tc" style="left:370px;top:679px;width:54px"><span>Map</span></div>
<div class="btnk" style="left:425px;top:675px;width:57px;height:22px"></div><div class="tc" style="left:425px;top:679px;width:57px"><span>Options</span></div>
<div class="btnk" style="left:483px;top:675px;width:56px;height:22px"></div><div class="tc" style="left:483px;top:679px;width:56px"><span>Docket</span></div>
<div class="btn" style="left:546px;top:675px;width:60px;height:22px;box-shadow:inset 0 0 0 1px #000,inset 2px 2px #fff"></div><div class="t" style="left:561px;top:679px;color:#0000c0">Close</div>
<!-- ===== Circuit Trace window ===== -->
<div class="win" style="left:17px;top:102px;width:415px;height:199px"></div>
<div class="tbi" style="left:21px;top:106px;width:407px;background:linear-gradient(90deg,#808080,#b4b4b4)"></div>
<svg class="a" style="left:23px;top:107px" width="16" height="16"><rect x=".5" y=".5" width="15" height="13" fill="#80e8e8" stroke="#404040"/><path d="M1 9h8M8 1v12" stroke="#40a0a0"/><rect x="10" y="2" width="5" height="2" fill="#fff" stroke="#606060" stroke-width=".5"/><rect x="10" y="6" width="5" height="2" fill="#fff" stroke="#606060" stroke-width=".5"/><rect x="10" y="10" width="5" height="2" fill="#fff" stroke="#606060" stroke-width=".5"/></svg>
<div class="t b" style="left:41px;top:108px;color:#c8c8c8;font-size:13px;transform:scaleX(.94)">Circuit Trace</div>
<div class="cb" style="left:377px;top:108px;height:13px"><svg width="16" height="13"><rect x="4" y="8" width="6" height="2" fill="#000"/></svg></div>
<div class="cb" style="left:393px;top:108px;height:13px"><svg width="16" height="13"><path d="M3.500 2.500h9v7h-9z" fill="none" stroke="#000"/><rect x="3" y="2" width="10" height="2" fill="#000"/></svg></div>
<div class="cb" style="left:411px;top:108px;height:13px"><svg width="16" height="13"><path d="M4 3l6 6M5 3l6 6M10 3l-6 6M11 3l-6 6" stroke="#000" stroke-width="1" fill="none"/></svg></div>
<div class="a" style="left:35px;top:127px;width:377px;height:2px;background:#000"></div>
<div class="a" style="left:35px;top:125px;width:1px;height:3px;background:#fff"></div>
<!-- group box -->
<div class="a" style="left:35px;top:138px;width:379px;height:130px;border:1px solid #808080;border-bottom:0"></div>
<div class="a" style="left:36px;top:139px;width:379px;height:130px;border:1px solid #fff;border-bottom:0;border-right:0"></div>
<div class="a" style="left:414px;top:138px;width:1px;height:130px;background:#fff"></div>
<div class="a" style="left:43px;top:132px;width:34px;height:14px;background:#bdbdbd"></div>
<div class="t" style="left:46px;top:131px;color:#000080">Trace</div>
<!-- nav buttons -->
<div class="btn" style="left:90px;top:145px;width:24px;height:24px"><svg class="a" style="left:0;top:0" width="24" height="24"><path d="M5.500 4v14" stroke="#000" stroke-width="3"/><path d="M7 11h13" stroke="#000" stroke-width="3"/><path d="M7 11l6-6v12z" fill="#000"/></svg></div>
<div class="btn" style="left:114px;top:145px;width:25px;height:24px"><svg class="a" style="left:0;top:0" width="25" height="24"><path d="M12.500 4v14" stroke="#000" stroke-width="3"/><path d="M4 11h17" stroke="#000" stroke-width="3"/><path d="M3 11l6-6v12zM22 11l-6-6v12z" fill="#000"/></svg></div>
<div class="btn" style="left:139px;top:145px;width:25px;height:24px"><svg class="a" style="left:0;top:0" width="25" height="24"><path d="M5.500 4v14" stroke="#000" stroke-width="3"/><path d="M6 11h12" stroke="#000" stroke-width="3"/><path d="M21 11l-6-6v12z" fill="#000"/></svg></div>
<!-- radios -->
<svg class="a" style="left:180px;top:142px" width="14" height="14"><circle cx="7" cy="7" r="5.500" fill="#fff" stroke="#dfdfdf" stroke-width="1.500"/><path d="M11.200 2.800a5.900 5.900 0 00-8.400 8.400" fill="none" stroke="#606060" stroke-width="1.500"/><path d="M10.500 3.500a4.900 4.900 0 00-7 7" fill="none" stroke="#000" stroke-width="1"/></svg>
<svg class="a" style="left:180px;top:157px" width="14" height="14"><circle cx="7" cy="7" r="5.500" fill="#fff" stroke="#dfdfdf" stroke-width="1.500"/><path d="M11.200 2.800a5.900 5.900 0 00-8.400 8.400" fill="none" stroke="#606060" stroke-width="1.500"/><path d="M10.500 3.500a4.900 4.900 0 00-7 7" fill="none" stroke="#000" stroke-width="1"/><circle cx="7" cy="7" r="2.600" fill="#000"/></svg>
<div class="t" style="left:203px;top:142px">From</div>
<div class="t" style="left:203px;top:158px">To</div>
<!-- icon buttons -->
<div class="btn" style="left:232px;top:147px;width:35px;height:24px"><svg class="a" style="left:0;top:0" width="35" height="24"><g><path d="M3 9h5M6 7l2 2-2 2" stroke="#000" fill="none" stroke-width="1.200"/><path d="M12 5l2-2 2 2v6h-4z" fill="#e8e800" stroke="#000" stroke-width=".8"/><path d="M23 5l3-3 3 3-3 7z" fill="#e000e0" stroke="#000" stroke-width=".8"/><path d="M9 15l4-3 4 2-2 4h-5z" fill="#00d000" stroke="#000" stroke-width=".8"/><path d="M21 15l3-2 6 3-2 3h-6z" fill="#00d8e8" stroke="#000" stroke-width=".8"/><path d="M14 11v3M26 11l-2 3M17 16h4" stroke="#000" stroke-width="1.300"/></g></svg></div>
<div class="btn" style="left:267px;top:147px;width:34px;height:24px;box-shadow:inset 0 0 0 1px #000,inset -2px -2px #000,inset 2px 2px #fff,inset -3px -3px #808080"><svg class="a" style="left:0;top:0" width="34" height="24"><g><path d="M3 9h5M6 7l2 2-2 2" stroke="#000" fill="none" stroke-width="1.200"/><path d="M12 5l2-2 2 2v6h-4z" fill="#e8e800" stroke="#000" stroke-width=".8"/><path d="M23 5l3-3 3 3-3 7z" fill="#e000e0" stroke="#000" stroke-width=".8"/><path d="M9 15l4-3 4 2-2 4h-5z" fill="#00d000" stroke="#000" stroke-width=".8"/><path d="M21 15l3-2 6 3-2 3h-6z" fill="#00d8e8" stroke="#000" stroke-width=".8"/><path d="M14 11v3M26 11l-2 3M17 16h4" stroke="#000" stroke-width="1.300"/></g><path d="M3 15h4M5 13l2 2-2 2" stroke="#000" fill="none"/></svg></div>
<div class="t" style="left:328px;top:154px">Planned</div>
<svg class="a" style="left:380px;top:153px" width="14" height="14"><circle cx="7" cy="7" r="5.500" fill="#fff" stroke="#dfdfdf" stroke-width="1.500"/><path d="M11.200 2.800a5.900 5.900 0 00-8.400 8.400" fill="none" stroke="#606060" stroke-width="1.500"/><path d="M10.500 3.500a4.900 4.900 0 00-7 7" fill="none" stroke="#000" stroke-width="1"/></svg>
<!-- list box -->
<div class="a" style="left:47px;top:178px;width:355px;height:84px;background:#fff;border-top:1px solid #000;border-left:1px solid #000"></div>
<div class="a" style="left:294px;top:181px;width:1px;height:70px;background:#808080"></div>
<div style="color:#000080">
<div class="t" style="left:52px;top:180px">[X2662]:RJ11-1:0001</div><div class="t" style="left:299px;top:180px">&lt;|&gt;</div>
<div class="t" style="left:56px;top:194px">&lt;-:rj11-1-A:[RJ11-0006]::rj11-1-Z:-&gt;</div><div class="t" style="left:299px;top:194px">{simple media}</div>
<div class="t" style="left:52px;top:208px">[01-01-023]:137</div><div class="t" style="left:299px;top:208px">{entry port}</div>
<div class="t" style="left:52px;top:222px">[01-01-023]:137</div><div class="t" style="left:299px;top:222px">{exit port}</div>
<div class="t" style="left:56px;top:236px">&lt;-:p/d-1-A:[V-01-01-023]::p/d-1-Z:-&gt;</div><div class="t" style="left:299px;top:236px">{simple media}</div>
</div>
<!-- bottom button panel -->
<div class="a" style="left:21px;top:260px;width:408px;height:38px;background:#bdbdbd;border-top:1px solid #000"></div>
<div class="a" style="left:21px;top:261px;width:1px;height:36px;background:#fff"></div>
<div class="btnk" style="left:37px;top:266px;width:58px;height:23px"></div><div class="tc" style="left:37px;top:271px;width:58px"><span><u>G</u>raphics</span></div>
<div class="btnk" style="left:99px;top:266px;width:58px;height:23px"></div><div class="tc" style="left:99px;top:271px;width:58px"><span>C<u>A</u>D</span></div>
<div class="btnk" style="left:199px;top:266px;width:58px;height:23px"></div><div class="tc" style="left:199px;top:271px;width:58px"><span><u>P</u>rint List</span></div>
<div class="btnk" style="left:354px;top:264px;width:58px;height:23px"></div><div class="tc" style="left:354px;top:269px;width:58px;color:#000080"><span><u>C</u>lose</span></div>
<!-- ===== Component Query window ===== -->
<div class="win" style="left:4px;top:308px;width:224px;height:192px"></div>
<div class="tb" style="left:8px;top:312px;width:216px"></div>
<svg class="a" style="left:10px;top:313px" width="16" height="16"><rect x=".5" y=".5" width="15" height="14" fill="#80e8e8" stroke="#202020"/><path d="M1 10h8M8 1v13" stroke="#40a0a0"/><rect x="10" y="2" width="5" height="2" fill="#fff" stroke="#606060" stroke-width=".5"/><rect x="10" y="6" width="5" height="2" fill="#fff" stroke="#606060" stroke-width=".5"/><rect x="10" y="10" width="5" height="2" fill="#fff" stroke="#606060" stroke-width=".5"/></svg>
<div class="t b" style="left:28px;top:314px;color:#fff;font-size:13px;transform:scaleX(.885)">Component Query</div>
<div class="cb" style="left:172px;top:314px"><svg width="16" height="14"><rect x="4" y="9" width="6" height="2" fill="#000"/></svg></div>
<div class="cb" style="left:188px;top:314px"><svg width="16" height="14"><path d="M3.500 2.500h9v8h-9z" fill="none" stroke="#000"/><rect x="3" y="2" width="10" height="2" fill="#000"/></svg></div>
<div class="cb" style="left:206px;top:314px"><svg width="16" height="14"><path d="M4 3l7 7M5 3l7 7M11 3l-7 7M12 3l-7 7" stroke="#000" stroke-width="1" fill="none"/></svg></div>
<!-- header -->
<div class="t" style="left:55px;top:340px">Location</div>
<div class="t" style="left:151px;top:340px">Catalog ID</div>
<!-- grid -->
<div class="a" style="left:8px;top:355px;width:200px;height:97px;background:#fff"></div>
<div class="a" style="left:8px;top:355px;width:19px;height:97px;background:#bdbdbd"></div>
<div class="a" style="left:8px;top:355px;width:200px;height:1px;background:#000"></div>
<div class="a" style="left:8px;top:371px;width:200px;height:1px;background:#000"></div>
<div class="a" style="left:8px;top:387px;width:200px;height:1px;background:#000"></div>
<div class="a" style="left:8px;top:403px;width:200px;height:1px;background:#000"></div>
<div class="a" style="left:8px;top:419px;width:200px;height:1px;background:#000"></div>
<div class="a" style="left:8px;top:435px;width:200px;height:1px;background:#000"></div>
<div class="a" style="left:8px;top:451px;width:200px;height:1px;background:#000"></div>
<div class="a" style="left:26px;top:355px;width:1px;height:97px;background:#000"></div>
<div class="a" style="left:52px;top:355px;width:1px;height:97px;background:#808080"></div>
<div class="a" style="left:147px;top:355px;width:1px;height:97px;background:#808080"></div>
<div class="t" style="left:55px;top:356px">B1-01-01</div><div class="t" style="left:149px;top:356px">EXPHONE</div>
<div class="t" style="left:55px;top:372px">B1-01-01</div><div class="t" style="left:149px;top:372px">EXPHONE</div>
<div class="t" style="left:55px;top:388px">B1-01-01</div><div class="t" style="left:149px;top:388px">EXPHONE</div>
<div class="t" style="left:55px;top:404px">B1-01-01</div><div class="t" style="left:149px;top:404px">EXPHONE</div>
<div class="t" style="left:55px;top:420px">B1-01-01</div><div class="t" style="left:149px;top:420px">EXPHONE</div>
<div class="t" style="left:55px;top:436px">B1-01-01</div><div class="t" style="left:149px;top:436px">EXPHONE</div>
<svg class="a" style="left:14px;top:390px" width="9" height="11"><path d="M1 0v11l7-5.500z" fill="#000"/></svg>
<!-- vscroll -->
<div class="a dith" style="left:208px;top:330px;width:16px;height:149px"></div>
<div class="sb" style="left:208px;top:330px"><svg width="16" height="16"><path d="M4 10h7l-3.500-4z" fill="#000"/></svg></div>
<div class="sb" style="left:208px;top:441px;height:15px"></div>
<div class="sb" style="left:208px;top:466px;height:13px"><svg width="16" height="13"><path d="M4 4h7l-3.500 4z" fill="#000"/></svg></div>
<!-- controls -->
<div class="a" style="left:26px;top:457px;width:34px;height:19px;overflow:hidden"><div class="btnk" style="left:-30px;top:0;width:64px;height:19px"></div></div><div class="t" style="left:26px;top:459px">fresh</div>
<div class="t b" style="left:89px;top:460px">+</div>
<div class="sunk" style="left:99px;top:461px;width:13px;height:13px;background:#fff"></div>
<div class="btnk" style="left:115px;top:457px;width:46px;height:20px"></div><div class="tc" style="left:115px;top:460px;width:46px"><span><u>S</u>how</span></div>
<div class="btn" style="left:163px;top:456px;width:46px;height:22px;box-shadow:inset 0 0 0 1px #000,inset -2px -2px #000,inset 2px 2px #fff,inset -3px -3px #808080"></div><div class="tc" style="left:163px;top:460px;width:46px"><span><u>Z</u>oom</span></div>
<div class="a" style="left:168px;top:460px;width:36px;height:14px;border:1px dotted #000"></div>
<!-- record navigator -->
<div class="btn" style="left:8px;top:482px;width:15px;height:15px"><svg class="a" style="left:0;top:0" width="15" height="15"><path d="M4 3v9M5 3v9" stroke="#000"/><path d="M11 3v9l-5-4.500z" fill="#000"/></svg></div>
<div class="btn" style="left:24px;top:482px;width:16px;height:15px"><svg class="a" style="left:0;top:0" width="16" height="15"><path d="M11 3v9l-6-4.500z" fill="#000"/></svg></div>
<div class="a" style="left:41px;top:482px;width:168px;height:15px;background:#fff;border-top:1px solid #808080"></div>
<div class="a" style="left:82px;top:482px;width:1px;height:15px;background:#000"></div>
<div class="a" style="left:145px;top:482px;width:1px;height:15px;background:#000"></div>
<div class="t" style="left:44px;top:483px">Record:</div><div class="t" style="left:85px;top:483px">58</div><div class="t" style="left:149px;top:483px">of&nbsp; 61</div>
</div>
</div>
<!-- MDI scrollbars -->
<div class="a dith" style="left:572px;top:105px;width:16px;height:583px"></div>
<div class="sb" style="left:572px;top:105px"><svg width="16" height="16"><path d="M4 10h7l-3.500-4z" fill="#000"/></svg></div>
<div class="sb" style="left:572px;top:128px;height:521px"></div>
<div class="sb" style="left:572px;top:672px"><svg width="16" height="16"><path d="M4 6h7l-3.500 4z" fill="#000"/></svg></div>
<div class="a dith" style="left:6px;top:688px;width:566px;height:16px"></div>
<div class="sb" style="left:6px;top:688px;height:16px"><svg width="16" height="16"><path d="M10 4v7l-4-3.500z" fill="#000"/></svg></div>
<div class="sb" style="left:30px;top:688px;width:490px;height:16px"></div>
<div class="sb" style="left:556px;top:688px;height:16px"><svg width="16" height="16"><path d="M6 4v7l4-3.500z" fill="#000"/></svg></div>
<div class="a" style="left:572px;top:688px;width:16px;height:16px;background:#bdbdbd"></div>
<div class="a" style="left:6px;top:704px;width:582px;height:1px;background:#000"></div>
<!-- inner status -->
<div class="st" style="left:8px;top:706px;width:342px;height:18px"></div>
<div class="t" style="left:16px;top:708px">Checking V_PORT</div>
<div class="a" style="left:352px;top:706px;width:1px;height:18px;background:#808080"></div>
<div class="st" style="left:358px;top:707px;width:30px;height:15px"></div>
<div class="st" style="left:390px;top:707px;width:30px;height:15px"></div>
<div class="st" style="left:422px;top:707px;width:27px;height:15px"></div>
<div class="st" style="left:451px;top:707px;width:32px;height:15px"></div>
<div class="st" style="left:485px;top:707px;width:30px;height:15px"></div>
<div class="st" style="left:517px;top:707px;width:33px;height:15px"></div>
<div class="st" style="left:552px;top:707px;width:27px;height:15px"></div>
<!--IN1-->
<!--ST0-->
<!-- ===== OUTER STATUS BARS ===== -->
<div class="a" style="left:4px;top:726px;width:588px;height:1px;background:#000"></div>
<div class="st" style="left:6px;top:728px;width:334px;height:15px"></div>
<div class="t" style="left:8px;top:728px">Select object(s) for editing...</div>
<div class="st" style="left:345px;top:728px;width:74px;height:15px"></div><div class="tc" style="left:345px;top:728px;width:74px"><span>Point</span></div>
<div class="st" style="left:428px;top:728px;width:70px;height:15px"></div><div class="tc" style="left:428px;top:728px;width:70px"><span>Center</span></div>
<div class="st" style="left:515px;top:728px;width:54px;height:15px"></div><div class="tc" style="left:515px;top:728px;width:54px"><span>614.4mm</span></div>
<div class="st" style="left:578px;top:728px;width:20px;height:15px"></div><div class="tc" style="left:578px;top:728px;width:20px"><span>D</span></div>
<div class="st" style="left:605px;top:728px;width:195px;height:15px"></div><div class="t" style="left:608px;top:728px">-2622.3mm&nbsp;&nbsp;&nbsp;-573.3mm</div>
<div class="st" style="left:6px;top:746px;width:100px;height:15px"></div>
<div class="st" style="left:123px;top:746px;width:83px;height:15px"></div><div class="tc" style="left:123px;top:746px;width:83px"><span>Scale:1.000</span></div>
<div class="st" style="left:214px;top:746px;width:83px;height:15px"></div><div class="tc" style="left:214px;top:746px;width:83px"><span>Rotation:0.0</span></div>
<div class="st" style="left:305px;top:746px;width:79px;height:15px"></div><div class="tc" style="left:305px;top:746px;width:79px"><span>0:SOLID</span></div>
<div class="st" style="left:393px;top:746px;width:53px;height:15px"></div><div class="tc" style="left:393px;top:746px;width:53px"><span>90.0</span></div>
<div class="st" style="left:454px;top:746px;width:28px;height:15px"></div><div class="tc" style="left:454px;top:746px;width:28px"><span>0</span></div>
<div class="st" style="left:491px;top:746px;width:28px;height:15px"></div><div class="tc" style="left:491px;top:746px;width:28px"><span>---</span></div>
<div class="st" style="left:530px;top:746px;width:28px;height:15px"></div><div class="tc" style="left:530px;top:746px;width:28px"><span>REL</span></div>
<div class="st" style="left:566px;top:746px;width:32px;height:15px;background:#fff"></div>
<div class="st" style="left:605px;top:746px;width:195px;height:15px"></div><div class="t" style="left:611px;top:746px">221:Outlet Text</div>
<!--ST1-->
</body></html>
